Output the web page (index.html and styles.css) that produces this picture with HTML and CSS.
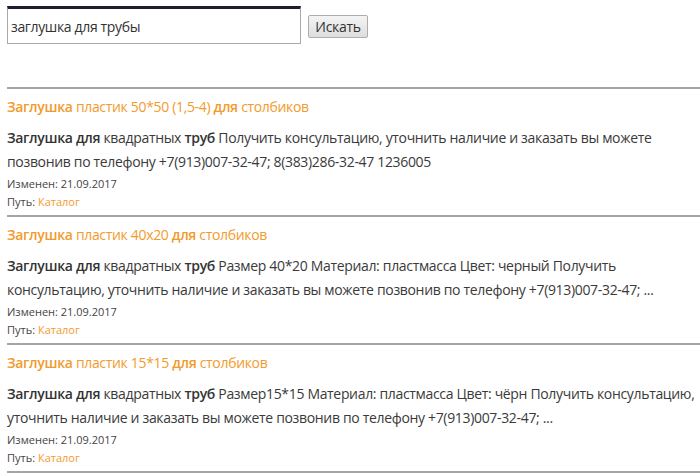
FILE: index.html
```
<!DOCTYPE html>
<html lang="ru">
<head>
    <meta charset="UTF-8">
    <title>Поиск</title>
    <link rel="stylesheet" href="styles.css">
</head>
<body>

    <form class="search" name="searchForm">
        <input type="text" class="search-input" name="q" value="заглушка для трубы">
        <input type="button" class="search-btn" value="Искать">
    </form>

    <div class="results">
        <div class="item">
            <a href="#" class="item-title"><b>Заглушка</b> пластик 50*50 (1,5-4) <b>для</b> столбиков</a>
            <p class="item-text"><b>Заглушка для</b> квадратных <b>труб</b> Получить консультацию, уточнить наличие и заказать вы можете позвонив по телефону +7(913)007-32-47; 8(383)286-32-47 1236005</p>
            <div class="item-meta">Изменен: 21.09.2017</div>
            <div class="item-meta">Путь: <a href="#">Каталог</a></div>
        </div>
        <div class="item">
            <a href="#" class="item-title"><b>Заглушка</b> пластик 40х20 <b>для</b> столбиков</a>
            <p class="item-text"><b>Заглушка для</b> квадратных <b>труб</b> Размер 40*20 Материал: пластмасса Цвет: черный Получить консультацию, уточнить наличие и заказать вы можете позвонив по телефону +7(913)007-32-47; ...</p>
            <div class="item-meta">Изменен: 21.09.2017</div>
            <div class="item-meta">Путь: <a href="#">Каталог</a></div>
        </div>
        <div class="item">
            <a href="#" class="item-title"><b>Заглушка</b> пластик 15*15 <b>для</b> столбиков</a>
            <p class="item-text"><b>Заглушка для</b> квадратных <b>труб</b> Размер15*15 Материал: пластмасса Цвет: чёрн Получить консультацию, уточнить наличие и заказать вы можете позвонив по телефону +7(913)007-32-47; ...</p>
            <div class="item-meta">Изменен: 21.09.2017</div>
            <div class="item-meta">Путь: <a href="#">Каталог</a></div>
        </div>
    </div>

</body>
</html>
```

FILE: styles.css
```
body {
    margin: 0;
    padding: 6px 0 0 7px;
    font-family: "Open Sans", "Liberation Sans", sans-serif;
    color: #3a3a3a;
    background: #fff;
}

.search {
    display: flex;
    align-items: center;
    gap: 7px;
    margin: 0;
}

.search-input {
    box-sizing: border-box;
    width: 294px;
    height: 38px;
    padding: 0 2px 0 3px;
    border: 1px solid #a9a9a9;
    border-top: 3px solid #1e1e2e;
    font-family: inherit;
    font-size: 14px;
    letter-spacing: -0.35px;
    color: #333;
    outline: none;
}

.search-btn {
    box-sizing: border-box;
    width: 60px;
    height: 23px;
    margin-top: 2px;
    border: 1px solid #adadad;
    border-radius: 2px;
    background: linear-gradient(#f4f4f4, #dedede);
    font-family: inherit;
    font-size: 14px;
    letter-spacing: -0.3px;
    color: #333;
    cursor: pointer;
}

.results {
    margin-top: 43px;
    border-top: 2px solid #a4a4a4;
}

.item {
    border-bottom: 2px solid #a4a4a4;
    padding-top: 8px;
}

.item-title {
    display: block;
    font-size: 14px;
    line-height: 19px;
    letter-spacing: -0.33px;
    color: #f39a2c;
    text-decoration: none;
}

.item-title b {
    font-weight: 600;
}

.item-text {
    margin: 10px 0 1px;
    font-size: 14px;
    line-height: 24px;
    letter-spacing: -0.33px;
    color: #3a3a3a;
}

.item-text b {
    font-weight: 600;
    color: #333;
}

.item-meta {
    font-size: 11px;
    line-height: 18px;
    color: #444;
}

.item-meta:last-child {
    padding-bottom: 4px;
}

.item-meta a {
    color: #f39a2c;
    text-decoration: none;
}
```
